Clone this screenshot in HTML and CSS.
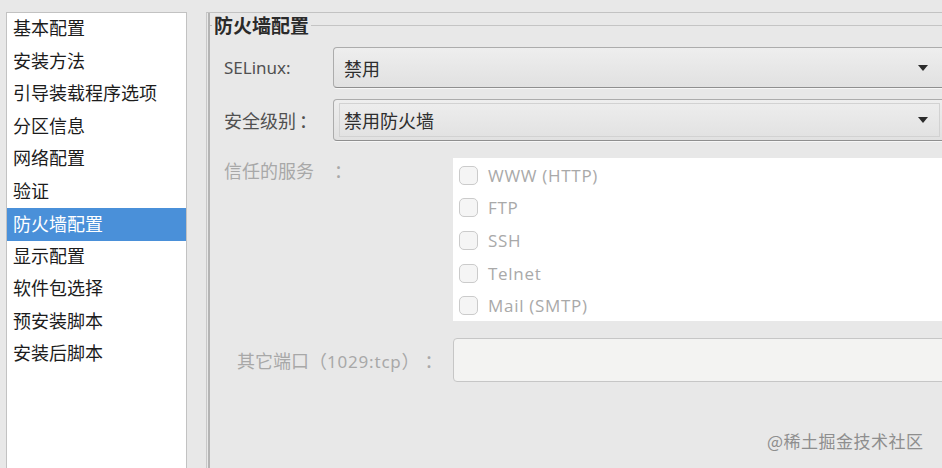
FILE: index.html
```html
<!DOCTYPE html>
<html lang="zh">
<head>
<meta charset="utf-8">
<link rel="stylesheet" href="styles.css">
</head>
<body>
<div class="window">
  <ul class="sidebar">
    <li class="item">基本配置</li>
    <li class="item">安装方法</li>
    <li class="item">引导装载程序选项</li>
    <li class="item">分区信息</li>
    <li class="item">网络配置</li>
    <li class="item">验证</li>
    <li class="item selected">防火墙配置</li>
    <li class="item">显示配置</li>
    <li class="item">软件包选择</li>
    <li class="item">预安装脚本</li>
    <li class="item">安装后脚本</li>
  </ul>
  <div class="panel">
    <div class="frame">
      <div class="legend-row">
        <span class="legend-tick"></span>
        <span class="legend">防火墙配置</span>
        <span class="legend-line"></span>
      </div>
      <div class="row row-select first">
        <span class="label latin">SELinux:</span>
        <div class="select">
          <span class="select-text">禁用</span>
          <span class="arrow"></span>
        </div>
      </div>
      <div class="row row-select second">
        <span class="label">安全级别<span class="colon">：</span></span>
        <div class="select focused">
          <div class="focus-ring">
            <span class="select-text">禁用防火墙</span>
            <span class="arrow"></span>
          </div>
        </div>
      </div>
      <div class="row row-services">
        <span class="label disabled">信任的服务<span class="colon services-colon">：</span></span>
        <div class="services">
          <label class="check"><span class="box"></span><span class="check-text">WWW (HTTP)</span></label>
          <label class="check"><span class="box"></span><span class="check-text">FTP</span></label>
          <label class="check"><span class="box"></span><span class="check-text">SSH</span></label>
          <label class="check"><span class="box"></span><span class="check-text">Telnet</span></label>
          <label class="check"><span class="box"></span><span class="check-text">Mail (SMTP)</span></label>
        </div>
      </div>
      <div class="row row-port">
        <span class="label disabled port-label">其它端口（<span class="num">1029:tcp</span>）<span class="colon port-colon">：</span></span>
        <div class="input"></div>
      </div>
    </div>
  </div>
</div>
<div class="watermark">@稀土掘金技术社区</div>
</body>
</html>
```

FILE: styles.css
```css
html, body {
  margin: 0;
  padding: 0;
}
body {
  width: 942px;
  height: 468px;
  overflow: hidden;
  background: #e8e8e8;
  font-family: "Noto Sans", "Noto Sans CJK SC", sans-serif;
  position: relative;
}
.window {
  display: flex;
  align-items: flex-start;
  padding: 12px 0 0 6px;
  width: 942px;
  overflow: hidden;
}
.sidebar {
  list-style: none;
  margin: 0;
  padding: 0;
  width: 179px;
  height: 470px;
  background: #fff;
  border: 1px solid #c2c2c2;
  border-bottom: none;
  flex: none;
}
.item {
  height: 32.5px;
  box-sizing: border-box;
  line-height: 29px;
  padding: 0 0 3.5px 6px;
  font-size: 18px;
  color: #1c1c1c;
  white-space: nowrap;
  font-family: "Noto Sans CJK SC", sans-serif;
}
.item.selected {
  background: #4a90d9;
  color: #fff;
  line-height: 31px;
  padding-bottom: 1.5px;
}
.panel {
  margin-left: 19px;
  flex: none;
  width: 760px;
  height: 470px;
  border-left: 1px solid #c8c8c8;
  border-top: 1px solid #c2c2c2;
}
.frame {
  margin-left: 1px;
  height: 470px;
  border-left: 2px solid #b4b4b4;
}
.legend-row {
  display: flex;
  align-items: center;
  height: 24px;
}
.legend-tick {
  width: 2px;
  height: 1px;
  background: #b4b4b4;
}
.legend {
  font-family: "Noto Sans CJK SC", sans-serif;
  font-weight: bold;
  font-size: 19px;
  color: #2a2a2a;
  padding: 0 2px 0 2px;
  line-height: 22px;
}
.legend-line {
  flex: 1;
  height: 1px;
  background: #c4c4c4;
}
.row {
  display: flex;
  align-items: center;
  padding-left: 14px;
}
.row-select.first {
  margin-top: 10px;
}
.row-select.second {
  margin-top: 11px;
}
.label {
  width: 109px;
  flex: none;
  font-size: 18px;
  color: #505050;
  font-family: "Noto Sans CJK SC", sans-serif;
  white-space: nowrap;
}
.label.latin {
  font-family: "Noto Sans", sans-serif;
  font-size: 17px;
}
.colon {
  display: inline-block;
  padding-left: 3px;
}
.colon.services-colon {
  padding-left: 20px;
}
.colon.port-colon {
  padding-left: 5px;
}
.num {
  font-family: "Noto Sans", sans-serif;
  font-size: 17px;
  letter-spacing: 0.8px;
}
.label.disabled {
  color: #a8a8a8;
}
.select {
  width: 612px;
  height: 41px;
  box-sizing: border-box;
  border: 1px solid #acacac;
  border-bottom-color: #8f8f8f;
  border-radius: 4px 0 0 4px;
  background: linear-gradient(#eeeeee, #e1e1e1);
  display: flex;
  align-items: center;
  padding: 0 16px 0 10px;
  box-shadow: 0 1px 0 #f6f6f6;
}
.select.focused {
  padding: 3px 4px 3px 5px;
  height: 42px;
}
.focus-ring {
  flex: 1;
  height: 100%;
  box-sizing: border-box;
  border: 1px solid #d2d2d2;
  display: flex;
  align-items: center;
  padding: 0 11px 0 4px;
}
.select-text {
  flex: 1;
  font-size: 18px;
  color: #2e2e2e;
  font-family: "Noto Sans CJK SC", sans-serif;
}
.arrow {
  width: 0;
  height: 0;
  border-left: 5.5px solid transparent;
  border-right: 5.5px solid transparent;
  border-top: 6px solid #2b2b2b;
}
.row-services {
  margin-top: 17px;
  align-items: flex-start;
}
.row-services .label {
  width: 229px;
  line-height: 24px;
}
.services {
  width: 500px;
  height: 163px;
  box-sizing: border-box;
  background: #fff;
  padding: 0 0 0 6px;
  display: flex;
  flex-direction: column;
}
.check {
  display: flex;
  align-items: center;
  height: 32.4px;
  padding-top: 2px;
}
.box {
  width: 19px;
  height: 19px;
  box-sizing: border-box;
  border: 1px solid #cbcbcb;
  border-radius: 5px;
  background: #f5f5f5;
  margin-right: 10px;
  flex: none;
}
.check-text {
  font-size: 17px;
  letter-spacing: 0.7px;
  color: #a9a9a9;
  font-family: "Open Sans", "Noto Sans", sans-serif;
}
.row-port {
  margin-top: 17px;
}
.port-label {
  width: 216px;
  padding-left: 13px;
}
.input {
  width: 500px;
  height: 44px;
  box-sizing: border-box;
  background: #f3f3f2;
  border: 1px solid #c6c6c6;
  border-radius: 4px 0 0 4px;
}
.watermark {
  position: absolute;
  left: 767px;
  top: 429px;
  font-size: 17px;
  line-height: 24px;
  color: #8e8e8e;
  font-family: "Noto Sans CJK SC", sans-serif;
  letter-spacing: 0.5px;
}
```
